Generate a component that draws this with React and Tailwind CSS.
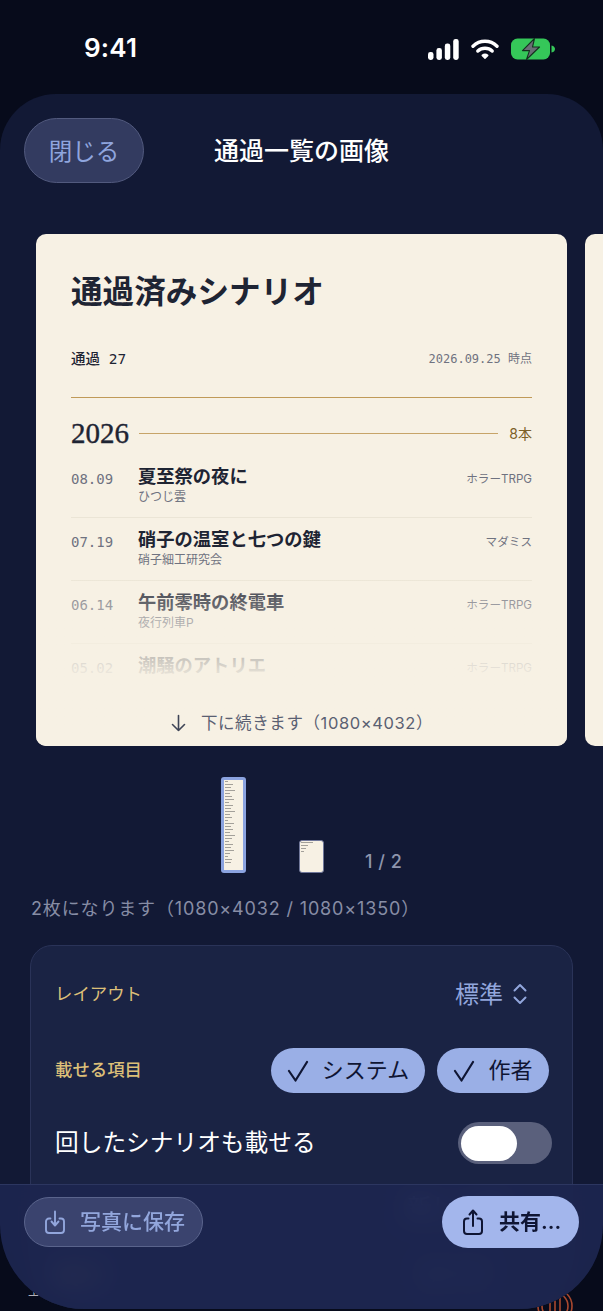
const sans = 'font-["Inter","Noto_Sans_CJK_JP","Noto_Sans",sans-serif]';
const serif = 'font-["Liberation_Serif","Noto_Sans_CJK_JP",serif]';
const mono = 'font-["DejaVu_Sans_Mono","Noto_Sans_CJK_JP",monospace]';

const rows = [
  { d: "08.09", t: "夏至祭の夜に", a: "ひつじ雲", k: "ホラーTRPG" },
  { d: "07.19", t: "硝子の温室と七つの鍵", a: "硝子細工研究会", k: "マダミス" },
  { d: "06.14", t: "午前零時の終電車", a: "夜行列車P", k: "ホラーTRPG" },
  { d: "05.02", t: "潮騒のアトリエ", a: "", k: "ホラーTRPG" },
];

function Check() {
  return (
    <svg width="22" height="22" viewBox="0 0 22 22" fill="none" stroke="#0f1533" strokeWidth="2.2" strokeLinecap="round" strokeLinejoin="round">
      <path d="M2 11 L8.5 20.5 L20 2" />
    </svg>
  );
}

function Mini({ lines, className }) {
  return (
    <div className={"flex flex-col gap-[2px] rounded-[3px] bg-[#f7f1e4] p-[1px] overflow-hidden " + className}>
      {lines.map((w, i) => (
        <div key={i} className="h-[1px] bg-[#a3a09a]" style={{ width: w }} />
      ))}
    </div>
  );
}

export default function App() {
  const longLines = [3, 8, 6, 10, 5, 7, 9, 4, 8, 6, 10, 5, 7, 3, 9, 6, 8, 5, 10, 7, 4, 8, 6, 9, 5, 3, 7, 6];
  return (
    <div className={"relative h-[1311px] w-[603px] overflow-hidden bg-[#070b1b] " + sans}>
      {/* page behind the sheet */}
      <div className="absolute bottom-[13px] left-[28px] text-[12px] leading-none text-[#b0b0b8]">工</div>
      <svg className="absolute bottom-[-15px] left-[535px]" width="40" height="40" viewBox="0 0 40 40" fill="none" stroke="#a8482f" strokeWidth="1.6">
        <circle cx="20" cy="20" r="17" />
        <circle cx="20" cy="20" r="13" />
        <path d="M15 12v14M20 10v18M25 12v14" />
      </svg>

      <div className="relative flex h-full flex-col pb-[2px]">
        {/* status bar */}
        <div className="flex h-[94px] shrink-0 items-start justify-between pl-[84px] pr-[48px] pt-[32px]">
          <span className="text-[26px] leading-[32px] font-semibold tracking-[0.2px] text-white">9:41</span>
          <div className="flex items-center gap-[12px] pt-[6px]">
            <svg width="31" height="21" viewBox="0 0 31 21" fill="white">
              <rect x="0" y="13" width="5.5" height="8" rx="2.4" />
              <rect x="8.4" y="9" width="5.5" height="12" rx="2.4" />
              <rect x="16.8" y="4.5" width="5.5" height="16.5" rx="2.4" />
              <rect x="25.2" y="0" width="5.5" height="21" rx="2.4" />
            </svg>
            <svg width="28" height="21" viewBox="0 0 28 21" fill="none" stroke="white" strokeWidth="3.4" strokeLinecap="round">
              <path d="M2 7.2 C8.8 0.6 19.2 0.6 26 7.2" />
              <path d="M6.8 12 C10.8 8.3 17.2 8.3 21.2 12" />
              <path d="M11.2 16.4 L14 19.2 L16.8 16.4 C15.2 15 12.8 15 11.2 16.4 Z" fill="white" strokeWidth="1.4" strokeLinejoin="round" />
            </svg>
            <svg width="44" height="22" viewBox="0 0 44 22">
              <rect x="0" y="0.5" width="39" height="21" rx="6.5" fill="#35c759" />
              <path d="M40.5 7.5 C43 8 44 9.5 44 11 C44 12.5 43 14 40.5 14.5 Z" fill="#35c759" />
              <path d="M23.5 0.5 L11.5 12.6 H18.5 L15.5 21.5 L28.5 9 H21.5 Z" fill="#6a6d75" stroke="#15301f" strokeWidth="1.1" strokeLinejoin="round" />
            </svg>
          </div>
        </div>

        {/* sheet */}
        <div className="relative flex-1 overflow-hidden rounded-t-[56px] rounded-b-[84px] bg-[#121935]">
          <div className="relative flex h-[140px] items-start px-[24px] pt-[24px]">
            <button className="flex h-[65px] w-[120px] items-center justify-center rounded-[33px] border border-[#525a7e] bg-[#333b60] pt-[2px] text-[23.5px] text-[#8fa5de]">
              閉じる
            </button>
            <span className="ml-[70px] mt-[15px] text-[25px] leading-[36px] font-medium text-white">通過一覧の画像</span>
          </div>

          {/* carousel */}
          <div className="flex gap-[18px] pl-[36px]">
            <div className="relative h-[512px] w-[531px] shrink-0 overflow-hidden rounded-[10px] bg-[#f7f1e4] px-[35px] text-[#1e2433]">
              <div className={"mt-[35px] text-[31.6px] leading-[48px] font-bold " + serif}>通過済みシナリオ</div>
              <div className={"mt-[32px] flex items-center justify-between leading-[20px] " + mono}>
                <span className="text-[14.5px] font-medium">通過 27</span>
                <span className="text-[12px] text-[#6f7280]">2026.09.25 時点</span>
              </div>
              <div className="mt-[28px] h-[1px] bg-[#c09a58]" />
              <div className="mt-[18px] flex items-center">
                <span className={"text-[29px] leading-[34px] font-normal [-webkit-text-stroke:0.4px_#1e2433] " + serif}>2026</span>
                <div className="ml-[10px] mr-[11px] h-[1px] flex-1 bg-[#c7a468]" />
                <span className="text-[14px] text-[#7d6028]">8本</span>
              </div>
              <div className="mt-[5px]">
                {rows.map((r) => (
                  <div key={r.d} className="flex h-[63px] items-start border-b border-[#ebe5d6] pt-[10px]">
                    <span className={"mt-[4px] w-[67px] shrink-0 text-[14px] leading-[20px] text-[#6f7280] " + mono}>{r.d}</span>
                    <div className="min-w-0 flex-1">
                      <div className={"text-[18.3px] leading-[24px] font-bold " + serif}>{r.t}</div>
                      <div className="text-[12px] leading-[15px] text-[#6f7280]">{r.a}</div>
                    </div>
                    <span className="mt-[5px] text-[11.6px] leading-[18px] text-[#6f7280]">{r.k}</span>
                  </div>
                ))}
              </div>
              <div className="absolute inset-x-0 bottom-0 flex h-[180px] items-end justify-center bg-gradient-to-b from-[#f7f1e400] via-[#f7f1e4] via-65% to-[#f7f1e4] pb-[11px]">
                <div className="flex items-center gap-[14px] text-[16.5px] tracking-[0.6px] leading-[24px] text-[#5a6072]">
                  <svg width="17" height="18" viewBox="0 0 17 18" fill="none" stroke="#3f4557" strokeWidth="1.6" strokeLinecap="round" strokeLinejoin="round">
                    <path d="M8.5 1.5V16.5M2.5 10.5L8.5 16.5L14.5 10.5" />
                  </svg>
                  <span>下に続きます（1080×4032）</span>
                </div>
              </div>
            </div>
            <div className="h-[512px] w-[531px] shrink-0 rounded-[10px] bg-[#f7f1e4]" />
          </div>

          {/* thumbnails */}
          <div className="mt-[31px] flex h-[96px] items-end pl-[221px]">
            <Mini lines={longLines} className="h-[96px] w-[25px] border-[3px] border-[#8ba3e0]" />
            <Mini lines={[12, 7, 5, 3]} className="ml-[53px] h-[33px] w-[25px] border-[1.5px] border-[#70779a]" />
            <span className="ml-[41px] text-[18px] leading-[22px] font-medium tracking-[0.5px] text-[#8e95ad]">1 / 2</span>
          </div>

          <div className="ml-[31px] mt-[22px] text-[18px] leading-[28px] tracking-[0.85px] text-[#878da5]">2枚になります（1080×4032 / 1080×1350）</div>

          {/* settings */}
          <div className="mx-[30px] mt-[22px] rounded-[22px] border border-[#2a3358] bg-[#1a2344] pl-[24px] pr-[23px]">
            <div className="flex h-[91px] items-center justify-between pr-[21px] pt-[5px]">
              <span className="text-[17.4px] text-[#dcbf78]">レイアウト</span>
              <div className="flex items-center gap-[9px]">
                <span className="pt-[2px] text-[24px] text-[#92a6dc]">標準</span>
                <svg width="16" height="24" viewBox="0 0 16 24" fill="none" stroke="#92a6dc" strokeWidth="2" strokeLinecap="round" strokeLinejoin="round">
                  <path d="M2.5 8.5L8 3L13.5 8.5M2.5 15.5L8 21L13.5 15.5" />
                </svg>
              </div>
            </div>
            <div className="flex h-[67px] items-center justify-between">
              <span className="text-[17.4px] font-medium text-[#dcbf78]">載せる項目</span>
              <div className="flex gap-[12px]">
                <div className="flex h-[45px] w-[154px] items-center justify-center gap-[13px] rounded-[23px] bg-[#9aafe6] text-[22px] text-[#0f1533]">
                  <Check />
                  <span>システム</span>
                </div>
                <div className="flex h-[45px] w-[112px] items-center justify-center gap-[13px] rounded-[23px] bg-[#9aafe6] text-[22px] text-[#0f1533]">
                  <Check />
                  <span>作者</span>
                </div>
              </div>
            </div>
            <div className="flex h-[78px] items-center justify-between">
              <span className="text-[23.7px] text-white">回したシナリオも載せる</span>
              <div className="mr-[-3px] flex h-[42px] w-[94px] items-center rounded-[21px] bg-[#5a607c] pl-[3px]">
                <div className="h-[35px] w-[56px] rounded-[18px] bg-white" />
              </div>
            </div>
            <div className="flex h-[52px] items-center justify-end pr-[46px]">
              <span className="text-[24px] text-[#aab6e0]">新しい順</span>
            </div>
            <div className="flex h-[84px] items-center justify-between pr-[60px]">
              <span className="text-[24px] text-[#dcbf78]">表示</span>
              <span className="text-[24px] text-[#92a6dc]">すべて</span>
            </div>
          </div>

          {/* floating action bar */}
          <div className="absolute inset-x-0 bottom-0 flex h-[125px] items-start justify-between border-t border-[#2c3660] bg-[#1d2650]/90 pl-[24px] pr-[24px] pt-[12px] backdrop-blur-md">
            <button className="flex h-[50px] w-[179px] items-center justify-start gap-[15px] rounded-[25px] border border-[#5a648c] bg-[#3a436e] pl-[20px] text-[21px] font-medium text-[#92a6dc]">
              <svg width="20" height="24" viewBox="0 0 20 24" fill="none" stroke="#92a6dc" strokeWidth="1.9" strokeLinecap="round" strokeLinejoin="round">
                <path d="M5.5 8.5H4a3 3 0 0 0-3 3V20a3 3 0 0 0 3 3h12a3 3 0 0 0 3-3v-8.5a3 3 0 0 0-3-3h-1.5" />
                <path d="M10 1.5V15M6.5 11.5L10 15.5L13.5 11.5" />
              </svg>
              <span>写真に保存</span>
            </button>
            <button className="mt-[-1px] flex h-[52px] w-[137px] items-center justify-start gap-[16px] rounded-[26px] bg-[#a3b6ec] pl-[21px] text-[21px] font-semibold text-[#0f1533]">
              <svg width="20" height="27" viewBox="0 0 20 27" fill="none" stroke="#0f1533" strokeWidth="2" strokeLinecap="round" strokeLinejoin="round">
                <path d="M5.5 9.5H4a3 3 0 0 0-3 3V22a3 3 0 0 0 3 3h12a3 3 0 0 0 3-3v-9.5a3 3 0 0 0-3-3h-1.5" />
                <path d="M10 17V2M6.5 5.5L10 1.5L13.5 5.5" />
              </svg>
              <span>共有...</span>
            </button>
          </div>
        </div>
      </div>
    </div>
  );
}
